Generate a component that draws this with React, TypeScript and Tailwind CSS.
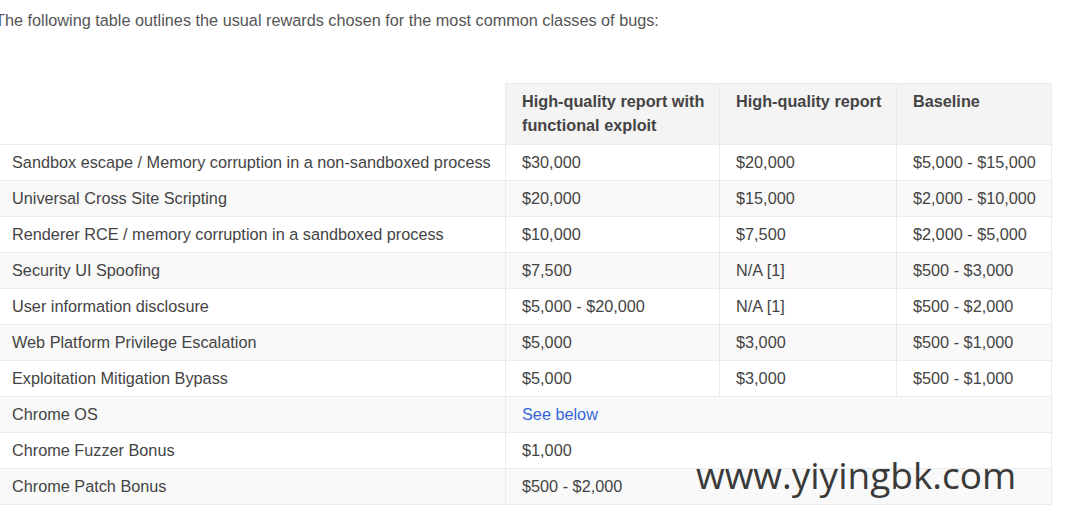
import React from "react";

const rows: [string, React.ReactNode, string?, string?][] = [
  ["Sandbox escape / Memory corruption in a non-sandboxed process", "$30,000", "$20,000", "$5,000 - $15,000"],
  ["Universal Cross Site Scripting", "$20,000", "$15,000", "$2,000 - $10,000"],
  ["Renderer RCE / memory corruption in a sandboxed process", "$10,000", "$7,500", "$2,000 - $5,000"],
  ["Security UI Spoofing", "$7,500", "N/A [1]", "$500 - $3,000"],
  ["User information disclosure", "$5,000 - $20,000", "N/A [1]", "$500 - $2,000"],
  ["Web Platform Privilege Escalation", "$5,000", "$3,000", "$500 - $1,000"],
  ["Exploitation Mitigation Bypass", "$5,000", "$3,000", "$500 - $1,000"],
];

const spanRows: [string, React.ReactNode][] = [
  ["Chrome OS", <span className="text-[#3367d6]">See below</span>],
  ["Chrome Fuzzer Bonus", "$1,000"],
  ["Chrome Patch Bonus", "$500 - $2,000"],
];

export default function App() {
  const head = "border border-[#ebebeb] px-4 pt-[5px] pb-[7px] align-top whitespace-nowrap";
  const cell = "border border-[#ebebeb] px-4 pt-[5px] pb-[6px] align-top whitespace-nowrap";
  return (
    <div className="relative w-[1067px] h-[516px] overflow-hidden bg-white text-[#444] font-['Liberation_Sans',Arial,sans-serif]">
      <div className="ml-[-5px]">
        <p className="pt-[10px] text-[16.25px] leading-[20px] text-[#555] whitespace-nowrap">
          The following table outlines the usual rewards chosen for the most common classes of bugs:
        </p>
        <table className="mt-[53px] w-[1056px] table-fixed border-collapse text-[16.25px] leading-[24px]">
          <colgroup>
            <col className="w-[510px]" />
            <col className="w-[214px]" />
            <col className="w-[177px]" />
            <col className="w-[155px]" />
          </colgroup>
          <thead>
            <tr>
              <th className="border-b border-[#ebebeb] bg-white"></th>
              <th className={`${head} bg-[#f4f4f4] text-left font-bold`}>
                High-quality report with
                <br />
                functional exploit
              </th>
              <th className={`${head} bg-[#f4f4f4] text-left font-bold`}>High-quality report</th>
              <th className={`${head} bg-[#f4f4f4] text-left font-bold`}>Baseline</th>
            </tr>
          </thead>
          <tbody>
            {rows.map((r, i) => (
              <tr key={i} className={i % 2 === 1 ? "bg-[#f9f9f9]" : "bg-white"}>
                <td className={cell}>{r[0]}</td>
                <td className={cell}>{r[1]}</td>
                <td className={cell}>{r[2]}</td>
                <td className={cell}>{r[3]}</td>
              </tr>
            ))}
            {spanRows.map((r, i) => (
              <tr key={"s" + i} className={i % 2 === 0 ? "bg-[#f9f9f9]" : "bg-white"}>
                <td className={cell}>{r[0]}</td>
                <td className={cell} colSpan={3}>{r[1]}</td>
              </tr>
            ))}
          </tbody>
        </table>
      </div>
      <div className="absolute left-[696px] top-[451px] text-[37px] leading-[48px] text-[#3a3a3a] font-['Open_Sans',sans-serif]">
        www.yiyingbk.com
      </div>
    </div>
  );
}
